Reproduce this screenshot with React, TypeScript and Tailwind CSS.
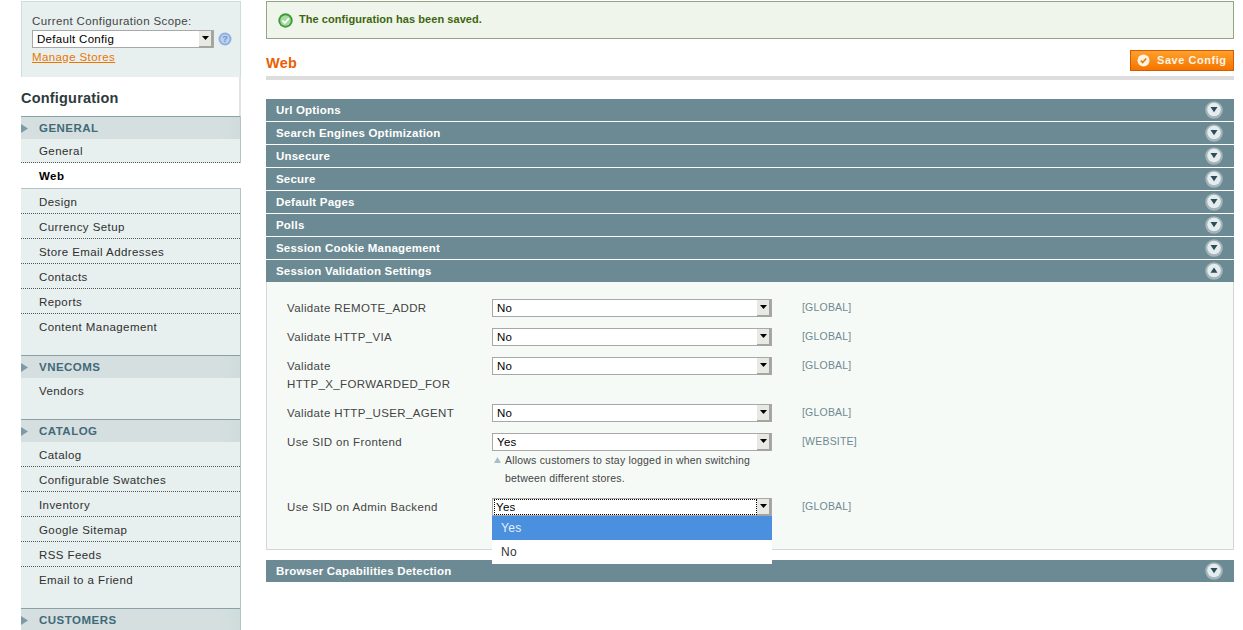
const FONT = "font-['Liberation_Sans',Arial,sans-serif]";

function Chevron({ up = false }: { up?: boolean }) {
  return (
    <svg width="18" height="18" viewBox="0 0 18 18" className="shrink-0">
      <circle cx="9" cy="9" r="8.8" fill="#a3b5ba" />
      <circle cx="9" cy="8.5" r="6.8" fill="#e4ecee" />
      <path d={up ? "M9 5.5 L12.5 10.8 L5.5 10.8 Z" : "M5.5 6 L12.5 6 L9 11.3 Z"} fill="#2b4c59" />
    </svg>
  );
}

function Bar({ label, up = false }: { label: string; up?: boolean }) {
  return (
    <div className="flex h-[22px] items-center justify-between bg-[#6c8a93] pl-[10px] pr-[11px] text-[11.5px] font-bold tracking-[0.2px] text-white">
      <span className="pt-[2px]">{label}</span>
      <Chevron up={up} />
    </div>
  );
}

function Arrow() {
  return (
    <div className="flex h-[17px] w-[14px] shrink-0 items-center justify-center border-r-2 border-b-2 border-[#a5a5a0] bg-[#e9e9e4]">
      <svg width="7" height="4" viewBox="0 0 7 4"><path d="M0 0H7L3.5 4Z" fill="#000" /></svg>
    </div>
  );
}

function FakeSelect({ value, focused = false, w = "w-[280px]" }: { value: string; focused?: boolean; w?: string }) {
  return (
    <div className={`flex h-[18px] ${w} items-center justify-between border border-[#a8a8a8] bg-white pl-1 text-[11.5px] leading-none tracking-[0.3px] text-black`}>
      <span className={focused ? "-ml-[3px] flex h-full flex-1 items-center border border-dotted border-black pl-[1px] pt-[2px]" : "pt-[2px]"}>{value}</span>
      <Arrow />
    </div>
  );
}

function FormRow({ label, value, scope, hint, focused, dropdown, h }: { label: React.ReactNode; value: string; scope: string; hint?: boolean; focused?: boolean; dropdown?: boolean; h: string }) {
  return (
    <div className={`flex items-start ${h}`}>
      <div className="w-[205px] text-[11.5px] leading-[18px] tracking-[0.37px] text-[#444]">{label}</div>
      <div className="relative w-[280px]">
        <FakeSelect value={value} focused={focused} />
        {hint && (
          <div className="relative pl-[13px] text-[10.5px] leading-[18px] tracking-[0.2px] text-[#444]">
            <svg width="7" height="6" viewBox="0 0 7 6" className="absolute left-[2px] top-[6px]"><path d="M3.5 0L7 6H0Z" fill="#a9bdc8" /></svg>
            Allows customers to stay logged in when switching between different stores.
          </div>
        )}
        {dropdown && (
          <div className="absolute left-0 top-[18px] z-10 w-[280px] bg-white text-[12px] tracking-[0.3px]">
            <div className="flex h-[24px] items-center bg-[#4a90df] pl-[9px] text-[#e8f0fa]">Yes</div>
            <div className="flex h-[24px] items-center pl-[9px] text-[#333]">No</div>
          </div>
        )}
      </div>
      <div className="ml-[30px] text-[10.5px] leading-[16px] tracking-[0.2px] text-[#6f8992]">{scope}</div>
    </div>
  );
}

function Group({ title, items, h, active, tightFirst }: { title: string; items: string[]; h: string; active?: string; tightFirst?: boolean }) {
  return (
    <div className={`${h} border-r border-[#b4c4c6] bg-[#e7efef]`}>
      <div className="relative flex h-[23px] items-center border-t border-[#8aa0a6] bg-[linear-gradient(to_right,#d6dfdf_90%,#cfdcdc)] pl-[18px] pt-[2px] text-[11.5px] font-bold tracking-[0.48px] text-[#3f6a7a]">
        <svg width="7" height="9" viewBox="0 0 7 9" className="absolute left-0 top-[7px]"><path d="M0 0L7 4.5L0 9Z" fill="#7d9ba6" /></svg>
        {title}
      </div>
      {items.map((it, i) => {
        const isActive = it === active;
        const last = i === items.length - 1;
        const tight = tightFirst && i === 0;
        let cls = "h-[25px] pt-[4px] text-[#2f2f2f]";
        if (tight) cls = "h-[24px] pt-[2px] text-[#2f2f2f]";
        if (isActive) cls = "relative z-[1] -mr-px h-[26px] border-b border-[#b4c4c6] bg-white pt-[2px] font-bold text-black";
        const border = isActive ? "" : last ? "border-b border-transparent" : "border-b border-dotted border-[#555]";
        return (
          <div key={it} className={`flex items-center pl-[18px] text-[11.5px] tracking-[0.42px] ${cls} ${border}`}>
            {it}
          </div>
        );
      })}
    </div>
  );
}

export default function App() {
  return (
    <div className={`flex h-[630px] overflow-hidden bg-white pl-[21px] ${FONT}`}>
      <aside className="w-[220px] shrink-0 pt-px">
        <div className="h-[76px] border border-b-0 border-[#cfdcdc] bg-[#e7efef] pl-[10px] pt-[12px]">
          <div className="text-[11.5px] leading-[14px] tracking-[0.38px] text-[#444]">Current Configuration Scope:</div>
          <div className="mt-[2px] flex items-center gap-[4px]">
            <FakeSelect value="Default Config" w="w-[182px]" />
            <svg width="14" height="14" viewBox="0 0 14 14">
              <circle cx="7" cy="7" r="6.5" fill="#8fb0e0" />
              <circle cx="7" cy="7" r="4.6" fill="#b9d0f0" />
              <text x="7" y="10.3" textAnchor="middle" fontSize="9" fontWeight="700" fill="#6f93c8" fontFamily="Liberation Sans">?</text>
            </svg>
          </div>
          <div className="mt-[1px] text-[11.5px] leading-[16px] tracking-[0.4px] text-[#ea7601] underline">Manage Stores</div>
        </div>
        <div className="flex h-[39px] items-center border-r-2 border-[#e6e0e0] bg-white pt-[5px] text-[14.5px] font-bold tracking-[0.2px] text-[#2f3a3d]">Configuration</div>
        <Group
          title="GENERAL"
          h="h-[239px]"
          active="Web"
          tightFirst
          items={["General", "Web", "Design", "Currency Setup", "Store Email Addresses", "Contacts", "Reports", "Content Management"]}
        />
        <Group title="VNECOMS" h="h-[64px]" items={["Vendors"]} />
        <Group
          title="CATALOG"
          h="h-[189px]"
          items={["Catalog", "Configurable Swatches", "Inventory", "Google Sitemap", "RSS Feeds", "Email to a Friend"]}
        />
        <Group title="CUSTOMERS" h="h-[40px]" items={[]} />
      </aside>

      <main className="ml-[25px] w-[968px] shrink-0 pt-px">
        <div className="flex h-[38px] items-center gap-[6px] border border-[#95a486] bg-[#eff5ea] pl-[11px] text-[11px] font-bold tracking-[0.06px] text-[#3d6611]">
          <svg width="15" height="15" viewBox="0 0 15 15">
            <circle cx="7.5" cy="7.5" r="7.2" fill="#3d9a3d" />
            <circle cx="7.5" cy="7.5" r="5.3" fill="#a6dba0" />
            <path d="M4.5 7.5L6.8 10L10.8 5.4" stroke="#fff" strokeWidth="1.8" fill="none" />
          </svg>
          <span className="pb-[2px]">The configuration has been saved.</span>
        </div>
        <div className="mt-[11px] flex h-[30px] items-start justify-between border-b-[4px] border-[#dddddd]">
          <h3 className="pt-[4px] text-[14.5px] font-bold leading-[19px] tracking-[0.3px] text-[#eb5e00]">Web</h3>
          <div className="flex h-[21px] w-[104px] items-center gap-[7px] border border-[#d85a00] bg-[linear-gradient(to_bottom,#fda12c,#f67400)] pl-[6px] text-[11px] font-bold tracking-[0.55px] text-[#fff4e6]">
            <svg width="13" height="13" viewBox="0 0 13 13">
              <circle cx="6.5" cy="6.5" r="6" fill="#fff4e6" />
              <path d="M3.8 6.6L5.7 8.6L9.2 4.5" stroke="#e9760c" strokeWidth="1.6" fill="none" />
            </svg>
            Save Config
          </div>
        </div>

        <div className="mt-[19px] flex flex-col gap-px">
          {["Url Options", "Search Engines Optimization", "Unsecure", "Secure", "Default Pages", "Polls", "Session Cookie Management"].map((t) => (
            <Bar key={t} label={t} />
          ))}
          <Bar label="Session Validation Settings" up />
        </div>

        <div className="h-[268px] border border-t-0 border-[#d6d6d6] bg-[#f6faf7] pl-[20px] pt-[17px]">
          <FormRow h="h-[29px]" label="Validate REMOTE_ADDR" value="No" scope="[GLOBAL]" />
          <FormRow h="h-[29px]" label="Validate HTTP_VIA" value="No" scope="[GLOBAL]" />
          <FormRow h="h-[47px]" label={<>Validate<br />HTTP_X_FORWARDED_FOR</>} value="No" scope="[GLOBAL]" />
          <FormRow h="h-[29px]" label="Validate HTTP_USER_AGENT" value="No" scope="[GLOBAL]" />
          <FormRow h="h-[65px]" label="Use SID on Frontend" value="Yes" scope="[WEBSITE]" hint />
          <FormRow h="h-[29px]" label="Use SID on Admin Backend" value="Yes" scope="[GLOBAL]" focused dropdown />
        </div>

        <div className="mt-[10px]">
          <Bar label="Browser Capabilities Detection" />
        </div>
      </main>
    </div>
  );
}
